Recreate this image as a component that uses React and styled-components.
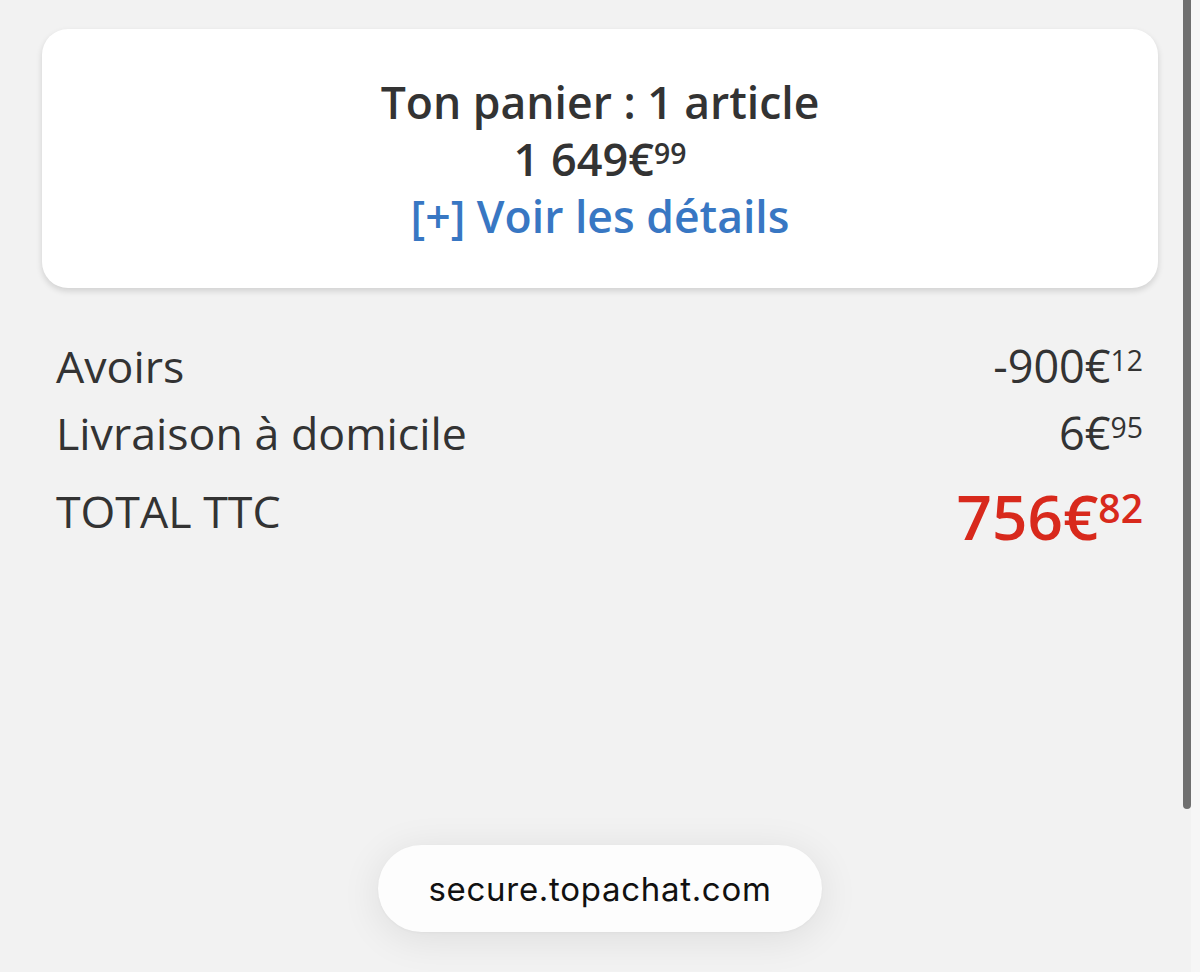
import React from "react";
import styled, { createGlobalStyle } from "styled-components";

const GlobalStyle = createGlobalStyle`
  html, body { margin: 0; padding: 0; }
  body {
    background: #f2f2f2;
    font-family: "Open Sans", "Noto Sans", sans-serif;
    color: #333333;
  }
`;

const Page = styled.div`
  position: relative;
  min-height: 972px;
  height: 100vh;
  overflow: hidden;
  background: #f2f2f2;
  padding-top: 29px;
  box-sizing: border-box;
`;

const Card = styled.section`
  margin: 0 42px;
  background: #ffffff;
  border-radius: 26px;
  box-shadow: 0 3px 6px rgba(0, 0, 0, 0.14);
  padding: 44px 0;
  display: flex;
  flex-direction: column;
  align-items: center;
  text-align: center;
`;

const CardLine = styled.div`
  font-size: 44.5px;
  line-height: 57px;
  font-weight: 600;
  color: ${(p) => (p.$link ? "#3877c3" : "#333333")};
  white-space: nowrap;
`;

const Summary = styled.div`
  margin-top: 44px;
  padding: 0 57px 0 56px;
  display: flex;
  flex-direction: column;
`;

const Row = styled.div`
  display: flex;
  justify-content: space-between;
  align-items: flex-start;
  margin-top: ${(p) => p.$gap || 0}px;
`;

const Label = styled.span`
  font-size: 44.7px;
  line-height: 67px;
  font-weight: 400;
  color: #333333;
`;

const Amount = styled.span`
  font-size: ${(p) => p.$size}px;
  line-height: ${(p) => p.$lh}px;
  font-weight: ${(p) => p.$weight || 400};
  color: ${(p) => p.$color || "#333333"};
  white-space: nowrap;
`;

const Cents = styled.span`
  font-size: 0.63em;
  vertical-align: 0.43em;
  line-height: 0;
`;

const Price = ({ euros, cents, ...rest }) => (
  <Amount {...rest}>
    {euros}€<Cents>{cents}</Cents>
  </Amount>
);

const Scrollbar = styled.div`
  position: absolute;
  top: 0;
  right: 9px;
  width: 8px;
  height: 809px;
  background: #6f6f6f;
  border-radius: 0 0 4px 4px;
`;

const ScrollEdge = styled.div`
  position: absolute;
  top: 0;
  right: 0;
  width: 9px;
  bottom: 0;
  background: #f6f6f6;
`;

const UrlPill = styled.div`
  position: absolute;
  left: 50%;
  bottom: 40px;
  transform: translateX(-50%);
  width: 444px;
  height: 87px;
  border-radius: 44px;
  background: #fdfdfd;
  box-shadow: 0 6px 40px rgba(0, 0, 0, 0.09), 0 1px 3px rgba(0, 0, 0, 0.03);
  display: flex;
  align-items: center;
  justify-content: center;
  font-family: Inter, Roboto, "Liberation Sans", sans-serif;
  font-size: 33px;
  font-weight: 400;
  color: #111111;
  letter-spacing: 0.7px;
`;

export default function App() {
  return (
    <>
      <GlobalStyle />
      <Page>
        <Card>
          <CardLine>Ton panier : 1 article</CardLine>
          <CardLine>
            <Price euros="1 649" cents="99" $size={45} $lh={57} $weight={600} />
          </CardLine>
          <CardLine $link>[+] Voir les détails</CardLine>
        </Card>
        <Summary>
          <Row>
            <Label>Avoirs</Label>
            <Price euros="-900" cents="12" $size={45} $lh={67} />
          </Row>
          <Row>
            <Label>Livraison à domicile</Label>
            <Price euros="6" cents="95" $size={45} $lh={67} />
          </Row>
          <Row $gap={11}>
            <Label>TOTAL TTC</Label>
            <Price euros="756" cents="82" $size={62} $lh={78} $weight={600} $color="#d8291c" />
          </Row>
        </Summary>
        <ScrollEdge />
        <Scrollbar />
        <UrlPill>secure.topachat.com</UrlPill>
      </Page>
    </>
  );
}
